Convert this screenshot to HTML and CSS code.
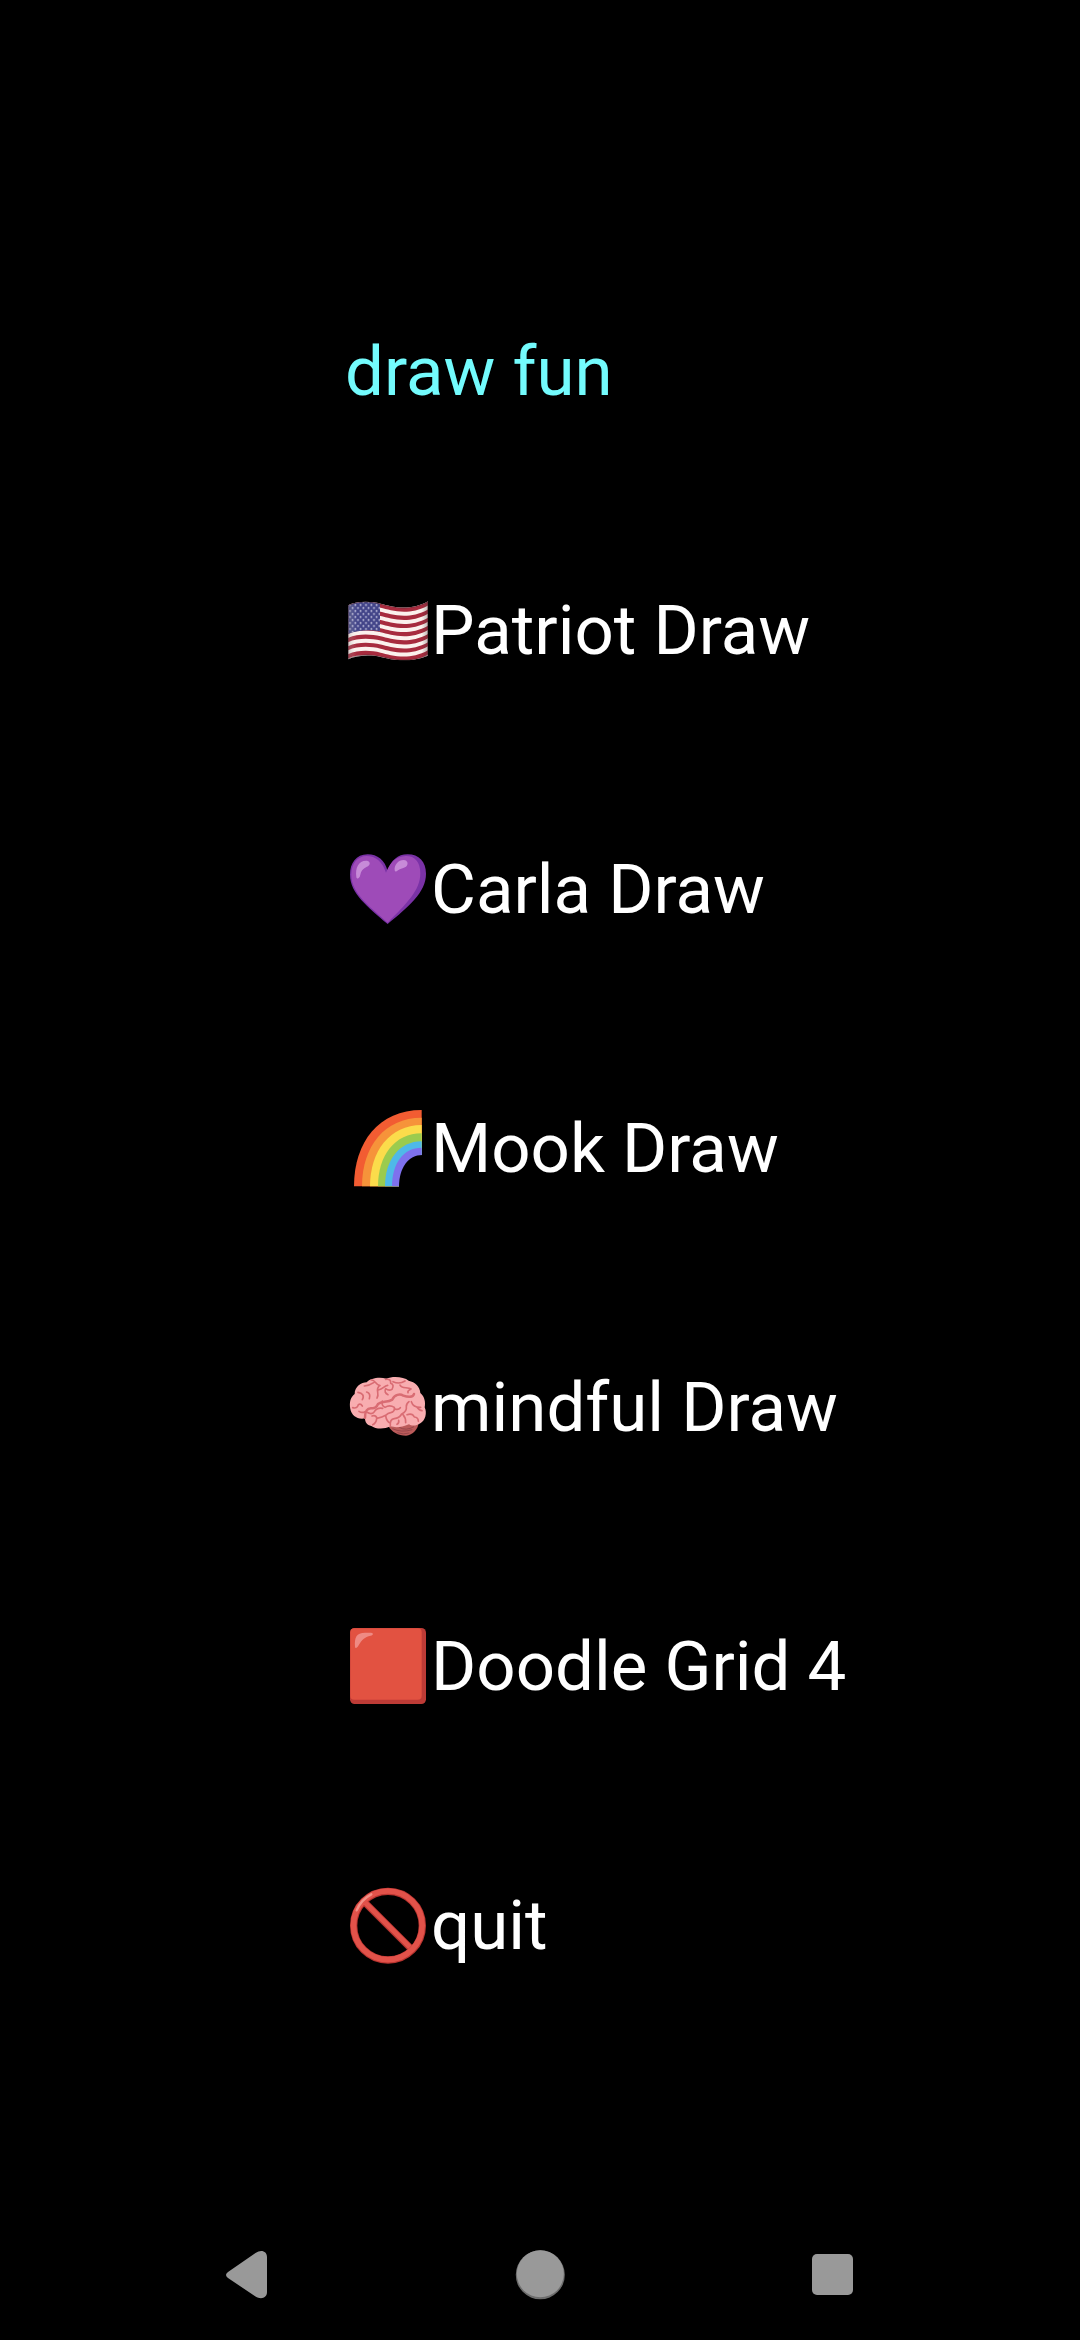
FILE: index.html
```html
<!DOCTYPE html>
<html lang="en">
<head>
<meta charset="utf-8">
<title>draw fun</title>
<link rel="stylesheet" href="styles.css">
</head>
<body>
<main class="menu">
  <h1 class="row title">draw fun</h1>
  <a class="row">
    <svg class="icon" viewBox="15 0 255 243">
      <defs>
        <clipPath id="flag"><path d="M24 46C55 32 92 34 122 41S205 67 264 34V197C205 221 152 208 122 201S55 195 24 208Z"/></clipPath>
        <pattern id="stars" width="16" height="18" patternUnits="userSpaceOnUse" x="26" y="40"><circle cx="4" cy="5" r="2.6" fill="#d9d7ed"/><circle cx="12" cy="14" r="2.6" fill="#d9d7ed"/></pattern>
        <linearGradient id="wave"><stop offset="0" stop-color="#555" stop-opacity=".35"/><stop offset=".12" stop-color="#fff" stop-opacity="0"/><stop offset=".9" stop-color="#333" stop-opacity="0"/><stop offset="1" stop-color="#333" stop-opacity=".4"/></linearGradient>
        <path id="stripe" d="M24 46C55 32 92 34 122 41S205 67 264 34V46.500C205 79.500 152 60.500 122 53.500S55 44.500 24 58.500Z"/>
      </defs>
      <g clip-path="url(#flag)">
        <path fill="#fbf1ed" d="M20 25H270V225H20Z"/>
        <g fill="#a72b3e">
          <use href="#stripe"/><use href="#stripe" y="24.5"/><use href="#stripe" y="49"/><use href="#stripe" y="73.5"/><use href="#stripe" y="98"/><use href="#stripe" y="122.5"/><use href="#stripe" y="147"/>
        </g>
        <path fill="#424488" d="M24 46C55 32 92 34 120 41V124C90 118 55 119 24 132Z"/>
        <path fill="url(#stars)" d="M24 46C55 32 92 34 120 41V124C90 118 55 119 24 132Z"/>
        <path fill="url(#wave)" d="M20 25H270V225H20Z"/>
        <path fill="none" stroke="#482832" stroke-opacity=".5" stroke-width="5" d="M24 46C55 32 92 34 122 41S205 67 264 34V197C205 221 152 208 122 201S55 195 24 208Z"/>
      </g>
    </svg>
    <span>Patriot Draw</span>
  </a>
  <a class="row">
    <svg class="icon" viewBox="15 27 255 243">
      <path fill="#7a32a6" d="M143 94C135 60 112 43 83 43C48 43 30 70 30 104C30 160 83 200 143 252C205 200 258 158 258 101C258 65 237 43 203 43C173 43 152 61 143 94Z"/>
      <path fill="#9e4bb8" d="M138 98C128 66 107 48 80 48C52 48 34 72 34 104C34 158 84 195 143 248C200 191 241 151 241 100C241 65 223 47 197 48C169 49 150 67 138 98Z"/>
      <g fill="#c78bd8"><path d="M49 111C45 83 56 62 78 62C88 62 92 69 87 76C80 84 66 83 61 104C59 116 50 119 49 111Z"/><path d="M164 91C162 75 175 60 191 60C204 61 206 73 198 80C190 86 181 84 174 91C168 96 165 96 164 91Z"/></g>
    </svg>
    <span>Carla Draw</span>
  </a>
  <a class="row">
    <svg class="icon" viewBox="15 24 255 243">
      <path fill="#f25c32" d="M42 259C42 126 117 30 245 30V259Z"/>
      <path fill="#f6933a" d="M66 259C66 140 133 53 245 53V259Z"/>
      <path fill="#fbdc4b" d="M90 259C90 154 149 75 245 75V259Z"/>
      <path fill="#9bcb4e" d="M114 259C114 167 164 100 245 100V259Z"/>
      <path fill="#4fb9e8" d="M135 259C135 180 178 124 245 124V259Z"/>
      <path fill="#7e71ed" d="M156 259C156 190 190 143 245 143V259Z"/>
      <path fill="#000" d="M177 261C177 203 205 165 247 165V261Z"/>
    </svg>
    <span>Mook Draw</span>
  </a>
  <a class="row">
    <svg class="icon" viewBox="15 6 255 243">
      <path fill="#bb5b5a" d="M145 183C155 201 174 212 198 212C218 211 236 190 235 174Z"/>
      <g fill="none" stroke="#8f4248" stroke-width="2.500"><path d="M157 191Q184 204 217 194M178 187Q198 199 222 185M172 203Q190 210 208 204"/></g>
      <path fill="#f8adb0" d="M31 132C27 112 32 96 44 87C44 65 64 52 80 52C91 39 119 35 139 41C160 32 192 36 206 47C225 51 240 65 241 84C254 94 257 113 254 127C262 144 256 167 241 175C227 185 213 182 207 178C184 188 165 188 151 184C132 194 106 192 94 183C81 181 75 172 75 160C53 165 34 151 31 132Z"/>
      <g fill="none" stroke="#d96c73" stroke-width="5" stroke-linecap="round" stroke-linejoin="round">
        <path stroke-width="7.500" d="M75 158C75 139 81 128 96 130Q108 131 114 117C125 108 142 113 157 104C163 88 181 86 190 92C204 97 219 98 222 87"/>
        <path d="M54 82C67 84 74 92 67 104M80 81Q93 85 88 101M73 63Q90 61 101 53M94 45C105 43 107 60 120 62M117 63C105 76 120 85 111 99M115 75C130 73 131 63 143 61M137 43Q154 41 152 55Q164 59 156 73Q147 79 137 71Q131 83 144 89M159 50Q178 59 195 48M180 60C184 72 204 65 213 72M210 74Q202 77 204 83"/>
        <path d="M38 128Q52 132 55 119Q62 115 67 123M57 139Q66 145 75 140M81 142Q95 150 103 140Q111 127 128 130M127 108Q123 121 135 127Q149 118 163 127Q165 140 152 143Q144 144 137 151M164 131Q174 137 181 128M96 153Q107 149 111 160Q127 157 137 151M110 160Q109 174 98 179M137 152Q139 169 151 175M151 181Q149 163 163 161Q178 159 185 147Q201 140 199 125Q198 117 207 110M189 149Q198 159 197 173M201 149Q217 143 223 156Q235 157 235 169M214 110Q220 128 242 127M231 127Q238 137 246 137M171 178Q178 174 176 166"/>
      </g>
    </svg>
    <span>mindful Draw</span>
  </a>
  <a class="row">
    <svg class="icon" viewBox="15 18 255 243">
      <rect x="30" y="24" width="228" height="228" rx="14" fill="#bd3b36"/>
      <rect x="31" y="25" width="214" height="214" rx="12" fill="#e25241"/>
      <path fill="#ef8a83" d="M45 80C43 52 49 38 75 38H93C101 39 101 45 92 47C74 51 65 59 56 76C51 85 46 87 45 80Z"/>
    </svg>
    <span>Doodle Grid 4</span>
  </a>
  <a class="row">
    <svg class="icon" viewBox="15 15 255 243">
      <g fill="none" stroke="#b93430"><circle cx="144" cy="137" r="103" stroke-width="22"/><path stroke-width="21" d="M76 69L211 204"/></g>
      <g fill="none" stroke="#e2524a"><circle cx="143.500" cy="136" r="103" stroke-width="17"/><path stroke-width="15" d="M76 68L210 202"/></g>
      <path fill="none" stroke="#f29087" stroke-width="7" stroke-linecap="round" d="M50 91Q64 58 94 43"/>
    </svg>
    <span>quit</span>
  </a>
</main>
<nav class="navbar">
  <svg class="nav" viewBox="0 0 60 60"><path fill="#999" d="M11 27L38.500 8C44 4 50 6 50 12V47C50 53 44 55 38.500 51.500L11 33Q7 30 11 27Z"/></svg>
  <svg class="nav" viewBox="0 0 60 60"><circle cx="30.300" cy="29.800" r="24.500" fill="#6d6d6d"/><circle cx="30.300" cy="28.800" r="23.500" fill="#999"/></svg>
  <svg class="nav" viewBox="0 0 60 60"><rect x="10" y="9" width="41" height="41" rx="5" fill="#999"/></svg>
</nav>
</body>
</html>
```
FILE: styles.css
```css
body {
  margin: 0;
  height: 2340px;
  box-sizing: border-box;
  padding-top: 242px;
  display: flex;
  flex-direction: column;
  justify-content: space-between;
  background: #000;
  color: #fff;
  font-family: Roboto, sans-serif;
  overflow: hidden;
}

.menu {
  padding-left: 345px;
}

.row {
  display: flex;
  align-items: center;
  height: 259px;
  margin: 0;
  font-size: 69px;
  font-weight: 400;
  line-height: 81px;
  white-space: nowrap;
}

.title {
  color: #73fbfd;
}

.icon {
  width: 85px;
  height: 81px;
  margin-right: 1px;
  flex: none;
}

.navbar {
  display: flex;
  justify-content: space-between;
  padding: 0 218px 35px 217px;
}

.nav {
  width: 60px;
  height: 60px;
}
```
